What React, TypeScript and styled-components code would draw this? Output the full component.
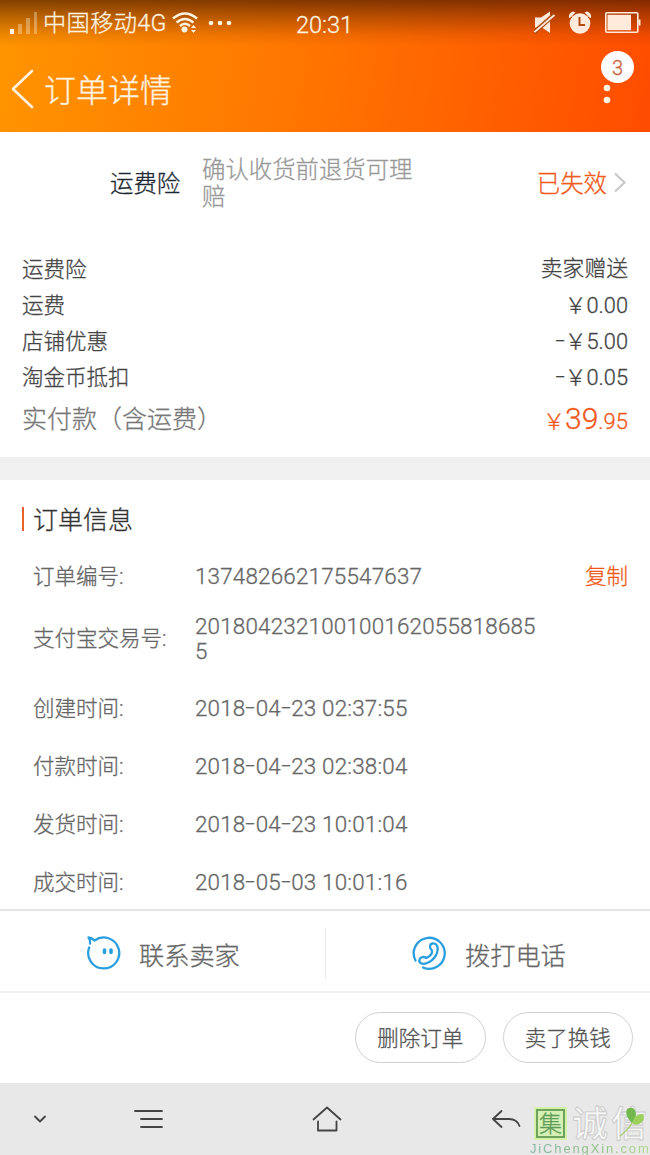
import React from 'react';
import styled, { createGlobalStyle } from 'styled-components';

const Global = createGlobalStyle`
  * { box-sizing: border-box; }
  body {
    margin: 0;
    background: #fff;
    font-family: Roboto, "Noto Sans CJK SC", sans-serif;
    font-weight: 300;
    line-height: 1.4;
    color: #444;
    -webkit-text-stroke: 0.3px currentColor;
  }
  svg { display: block; flex: none; }
`;

const Screen = styled.div`
  width: 650px;
  height: 1155px;
  display: flex;
  flex-direction: column;
  overflow: hidden;
  background: #fff;
`;

const Header = styled.header`
  height: 132px;
  flex: none;
  color: #fff3e2;
  background:
    linear-gradient(180deg, rgba(70, 25, 0, 0.68) 0, rgba(90, 35, 0, 0.4) 18px, rgba(110, 40, 0, 0.12) 35px, rgba(120, 40, 0, 0) 46px),
    linear-gradient(100deg, #ff9500 0%, #ff7300 50%, #ff4c00 100%);
`;

const StatusBar = styled.div`
  height: 45px;
  padding: 0 9px 0 10px;
  display: grid;
  grid-template-columns: 1fr auto 1fr;
  align-items: center;
`;

const Carrier = styled.div`
  display: flex;
  align-items: center;
  font-size: 23.2px;
  line-height: 40px;
  white-space: nowrap;
`;

const CarrierName = styled.span`
  margin: 0 5px 0 5px;
  letter-spacing: 0.4px;
`;

const StatusDots = styled.span`
  margin-left: 10px;
`;

const Clock = styled.div`
  font-size: 23.5px;
  line-height: 40px;
  padding-top: 4px;
  margin-left: -2px;
`;

const Indicators = styled.div`
  display: flex;
  justify-content: flex-end;
  align-items: center;
  gap: 13px;
`;

const TitleBar = styled.div`
  height: 87px;
  padding: 0 17px 0 11px;
  display: flex;
  align-items: center;
`;

const Title = styled.h1`
  margin: 4px 0 0 10px;
  flex: 1;
  font-size: 32px;
  font-weight: 300;
  line-height: 48px;
`;

const More = styled.div`
  position: relative;
  width: 32px;
  height: 87px;
`;

const Dots = styled.svg`
  margin: 38px 0 0 1px;
`;

const Badge = styled.span`
  position: absolute;
  top: 6px;
  left: 0;
  width: 33px;
  height: 32px;
  border-radius: 50%;
  background: #fff;
  color: #c8623a;
  font-size: 20px;
  line-height: 34px;
  text-align: center;
`;

const Insurance = styled.section`
  height: 100px;
  flex: none;
  padding: 4px 23px 0 110px;
  display: flex;
  align-items: center;
  font-size: 23.4px;
  line-height: 27px;
`;

const InsuranceName = styled.span`
  width: 92px;
  color: #1c2833;
`;

const InsuranceNote = styled.p`
  width: 214px;
  margin: 0;
  color: #999;
`;

const InsuranceState = styled.span`
  flex: 1;
  margin-right: 6px;
  text-align: right;
  color: #f0591a;
`;

const InsuranceArrow = styled.span`
  padding-bottom: 3px;
`;

const Summary = styled.section`
  height: 225px;
  flex: none;
  padding: 19.5px 22px 0;
`;

const SummaryRow = styled.div<{ $total?: boolean }>`
  height: ${(p) => (p.$total ? 46 : 36.2)}px;
  display: flex;
  justify-content: space-between;
  align-items: center;
  font-size: ${(p) => (p.$total ? 25 : 21.5)}px;
  color: ${(p) => (p.$total ? '#777' : '#444')};
`;

const Amount = styled.span`
  font-size: 21.8px;
`;

const Price = styled.span`
  color: #f0591a;
  font-size: 22px;
`;

const PriceMajor = styled.span`
  font-size: 30px;
`;

const Divider = styled.div`
  height: 23px;
  flex: none;
  background: #f0f0f0;
`;

const OrderInfo = styled.section`
  height: 429px;
  flex: none;
  padding: 26px 22px 0;
`;

const SectionTitle = styled.h2`
  height: 26px;
  margin: 0 0 15.5px;
  display: flex;
  align-items: center;
  gap: 9px;
  font-size: 25px;
  font-weight: 300;
  line-height: 30px;
  color: #333;

  &::before {
    content: '';
    width: 2px;
    height: 24px;
    background: #e8602c;
  }
`;

const SectionName = styled.span`
  padding-top: 3px;
`;

const InfoRow = styled.div<{ $tall?: boolean }>`
  height: ${(p) => (p.$tall ? 66 : 58)}px;
  margin-bottom: ${(p) => (p.$tall ? 7.5 : 0)}px;
  padding-left: 11px;
  display: flex;
  align-items: center;
  font-size: 21.5px;
  line-height: 25px;
  color: #666;
`;

const InfoLabel = styled.span`
  width: 162px;
`;

const InfoValue = styled.span`
  width: 346px;
  font-size: 22.4px;
  letter-spacing: 0.2px;
  word-break: break-all;
`;

const Dash = styled.span`
  display: inline-block;
  margin: 0 1.8px;
  transform: translateY(-1px) scaleX(1.5);
`;

const Copy = styled.span`
  flex: 1;
  text-align: right;
  color: #f0591a;
`;

const Contacts = styled.section`
  height: 84px;
  flex: none;
  padding-top: 4px;
  display: flex;
  align-items: center;
  border-top: 2px solid #e4e4e4;
  border-bottom: 2px solid #f0f0f0;
`;

const Contact = styled.div`
  width: 325px;
  height: 50px;
  padding-left: 85px;
  display: flex;
  align-items: center;
  gap: 18px;
  font-size: 25.2px;
  color: #666;

  & + & {
    border-left: 1px solid #e8e8e8;
  }
`;

const ContactLabel = styled.span`
  padding-top: 7px;
`;

const Actions = styled.section`
  height: 90px;
  flex: none;
  padding: 0 17px 2px;
  display: flex;
  justify-content: flex-end;
  align-items: center;
  gap: 17px;
`;

const Pill = styled.button`
  width: 130.5px;
  height: 51px;
  padding: 5px 0 0;
  border: 1px solid #d0d0d0;
  border-radius: 26px;
  background: #fff;
  color: #555;
  font: inherit;
  font-size: 21.5px;
`;

const NavBar = styled.nav`
  height: 72px;
  flex: none;
  padding-left: 33px;
  display: flex;
  align-items: center;
  background: #e8e8e8;
`;

const NavItem = styled.div<{ $space: number }>`
  margin-right: ${(p) => p.$space}px;
`;

const Watermark = styled.div`
  height: 72px;
  padding-top: 23px;
`;

const WatermarkTop = styled.div`
  display: flex;
  align-items: center;
  height: 35px;
  padding-left: 6px;
`;

const Seal = styled.span`
  width: 29px;
  height: 29px;
  border: 2px solid #6ea35c;
  outline: 2px solid #d5f0a8;
  background: #d5f0b4;
  color: #5f9c5a;
  font-size: 23px;
  line-height: 28px;
  text-align: center;
`;

const WatermarkName = styled.span`
  position: relative;
  display: flex;
  gap: 3px;
  margin-left: 7px;
  padding-top: 2px;
  font-size: 36px;
  font-weight: 500;
  line-height: 36px;
  color: #f6f6f6;
  -webkit-text-stroke: 0.8px #c8c8c8;
`;

const Leaf = styled.svg`
  position: absolute;
  top: 0;
  right: 2px;
`;

const WatermarkUrl = styled.div`
  margin-top: 1px;
  font: 400 13px/13px "Liberation Sans", sans-serif;
  letter-spacing: 1.85px;
  background: linear-gradient(90deg, #83b5a5, #8fc080 60%, #b0dc8c);
  background-clip: text;
  color: transparent;
  -webkit-text-stroke: 0;
  white-space: nowrap;
`;

const SUMMARY = [
  ['运费险', '卖家赠送'],
  ['运费', '￥0.00'],
  ['店铺优惠', '-￥5.00'],
  ['淘金币抵扣', '-￥0.05'],
];

const INFO = [
  { label: '订单编号:', value: '137482662175547637', copy: true },
  { label: '支付宝交易号:', value: '2018042321001001620558186855', tall: true },
  { label: '创建时间:', value: '2018-04-23 02:37:55' },
  { label: '付款时间:', value: '2018-04-23 02:38:04' },
  { label: '发货时间:', value: '2018-04-23 10:01:04' },
  { label: '成交时间:', value: '2018-05-03 10:01:16' },
];

const Dashed = ({ text }: { text: string }) => (
  <>
    {text.split('-').map((part, i) => (
      <React.Fragment key={i}>
        {i > 0 && <Dash>-</Dash>}
        {part}
      </React.Fragment>
    ))}
  </>
);

const SignalIcon = () => (
  <svg width="28" height="22" viewBox="0 0 28 22" fill="#fff3e2">
    <rect x="0" y="17" width="4" height="5" />
    <rect x="8" y="12" width="4" height="10" opacity=".35" />
    <rect x="16" y="6" width="4" height="16" opacity=".35" />
    <rect x="24" y="0" width="3" height="22" opacity=".35" />
  </svg>
);

const WifiIcon = () => (
  <svg width="26" height="21" viewBox="0 0 26 21" fill="none" stroke="#fff3e2" strokeWidth="2.4">
    <path d="M1 6.5Q13-3.500 25 6.5M4.500 10.500Q13 3.500 21.500 10.500M8 14Q13 9.500 18 14" />
    <circle cx="12.500" cy="17.500" r="3" fill="#fff3e2" stroke="none" />
    <path d="M19 16l2.500-3 2.500 3zM19 18l2.500 3 2.500-3z" fill="#fff3e2" stroke="none" />
  </svg>
);

const EllipsisIcon = () => (
  <svg width="24" height="6" viewBox="0 0 24 6" fill="#fff3e2">
    <circle cx="3" cy="3" r="2.300" />
    <circle cx="12" cy="3" r="2.300" />
    <circle cx="21" cy="3" r="2.300" />
  </svg>
);

const MuteIcon = () => (
  <svg width="21" height="23" viewBox="0 0 21 23">
    <path d="M1 6.500h6L16 .500V22L8 16.500H1z" fill="#ffeadc" />
    <path d="M0 21.500L20 4" stroke="#b04a10" strokeWidth="4.400" />
    <path d="M.500 21L20.500 4" stroke="#ffeadc" strokeWidth="1.800" />
  </svg>
);

const AlarmIcon = () => (
  <svg width="24" height="23" viewBox="0 0 24 23">
    <circle cx="12" cy="12.500" r="10.300" fill="#ffeadc" />
    <path d="M1 7Q0 2 5 .500L7.500 1.500 2.500 6.500zM23 7Q24 2 19 .500L16.500 1.500 21.500 6.500z" fill="#ffeadc" />
    <path d="M11.500 6v8H17" fill="none" stroke="#b04a10" strokeWidth="2" />
  </svg>
);

const BatteryIcon = () => (
  <svg width="36" height="21" viewBox="0 0 36 21" fill="#ffeadc">
    <rect x=".800" y=".800" width="32" height="19.400" rx="1" fill="none" stroke="#ffeadc" strokeWidth="1.600" />
    <rect x="2.500" y="2.800" width="23.500" height="15.400" />
    <rect x="33.500" y="7.500" width="2" height="6" />
  </svg>
);

const BackIcon = () => (
  <svg width="23" height="40" viewBox="0 0 23 40" fill="none" stroke="#fff3e2" strokeWidth="2.600" strokeLinecap="round" strokeLinejoin="round">
    <path d="M21 2L2 20l19 18" />
  </svg>
);

const ChevronIcon = () => (
  <svg width="14" height="22" viewBox="0 0 14 22" fill="none" stroke="#c9c9c9" strokeWidth="2.200">
    <path d="M2 1.500L11.500 10.500 2 19.500" />
  </svg>
);

const WangwangIcon = () => (
  <svg width="36" height="36" viewBox="0 0 36 36" fill="none" stroke="#2a9fe0" strokeWidth="2.300" strokeLinecap="round" strokeLinejoin="round">
    <path d="M4.200 12.500A15.500 15.500 0 1 0 9.500 5.500Q7 3 3.500 2.500Q5.500 5 5 8.500" />
    <path d="M19.500 15v2.500M26 15v2.500" strokeWidth="3.600" />
  </svg>
);

const PhoneIcon = () => (
  <svg width="36" height="36" viewBox="0 0 36 36" fill="none" stroke="#2a9fe0" strokeWidth="2.300" strokeLinecap="round" strokeLinejoin="round">
    <path d="M4.500 25.500A15.500 15.500 0 1 1 12 32.500" />
    <path d="M19 11.500C19 8 24 7 26 10.500C28.500 17 23.500 25 16 28C11 30 7.500 28 8.500 24.500C9.500 21.500 13 21.500 15.500 23C19.500 21 21.500 18.500 21 15.500C19.500 14.500 19 13 19 11.500Z" />
  </svg>
);

const navStroke = { fill: 'none', stroke: '#444', strokeWidth: 1.8, strokeLinecap: 'round', strokeLinejoin: 'round' } as const;

export default function App() {
  return (
    <>
      <Global />
      <Screen>
        <Header>
          <StatusBar>
            <Carrier>
              <SignalIcon />
              <CarrierName>中国移动4G</CarrierName>
              <WifiIcon />
              <StatusDots>
                <EllipsisIcon />
              </StatusDots>
            </Carrier>
            <Clock>20:31</Clock>
            <Indicators>
              <MuteIcon />
              <AlarmIcon />
              <BatteryIcon />
            </Indicators>
          </StatusBar>
          <TitleBar>
            <BackIcon />
            <Title>订单详情</Title>
            <More>
              <Dots width="10" height="22" viewBox="0 0 10 22" fill="#fff3e2">
                <circle cx="5" cy="5" r="3.300" />
                <circle cx="5" cy="17" r="3.300" />
              </Dots>
              <Badge>3</Badge>
            </More>
          </TitleBar>
        </Header>

        <Insurance>
          <InsuranceName>运费险</InsuranceName>
          <InsuranceNote>确认收货前退货可理赔</InsuranceNote>
          <InsuranceState>已失效</InsuranceState>
          <InsuranceArrow>
            <ChevronIcon />
          </InsuranceArrow>
        </Insurance>

        <Summary>
          {SUMMARY.map(([label, value]) => (
            <SummaryRow key={label}>
              <span>{label}</span>
              <Amount>
                <Dashed text={value} />
              </Amount>
            </SummaryRow>
          ))}
          <SummaryRow $total>
            <span>实付款（含运费）</span>
            <Price>
              ￥<PriceMajor>39</PriceMajor>.95
            </Price>
          </SummaryRow>
        </Summary>

        <Divider />

        <OrderInfo>
          <SectionTitle>
            <SectionName>订单信息</SectionName>
          </SectionTitle>
          {INFO.map((row) => (
            <InfoRow key={row.label} $tall={row.tall}>
              <InfoLabel>{row.label}</InfoLabel>
              <InfoValue>
                <Dashed text={row.value} />
              </InfoValue>
              {row.copy && <Copy>复制</Copy>}
            </InfoRow>
          ))}
        </OrderInfo>

        <Contacts>
          <Contact>
            <WangwangIcon />
            <ContactLabel>联系卖家</ContactLabel>
          </Contact>
          <Contact>
            <PhoneIcon />
            <ContactLabel>拨打电话</ContactLabel>
          </Contact>
        </Contacts>

        <Actions>
          <Pill>删除订单</Pill>
          <Pill>卖了换钱</Pill>
        </Actions>

        <NavBar>
          <NavItem $space={86}>
            <svg width="14" height="8" viewBox="0 0 14 8" {...navStroke}>
              <path d="M2 1.500l5 5 5-5" />
            </svg>
          </NavItem>
          <NavItem $space={149}>
            <svg width="30" height="20" viewBox="0 0 30 20" {...navStroke}>
              <path d="M2 2h27M8 10h21M8 18h21" />
            </svg>
          </NavItem>
          <NavItem $space={149}>
            <svg width="30" height="26" viewBox="0 0 30 26" {...navStroke}>
              <path d="M1.500 13.500L15 1.500l13.500 12M6 15.500V24.500h18.500V15.500" />
            </svg>
          </NavItem>
          <NavItem $space={9}>
            <svg width="30" height="20" viewBox="0 0 30 20" {...navStroke}>
              <path d="M10.500 2L2 10l8.500 8M2 10H18Q26 10 28.500 17" />
            </svg>
          </NavItem>
          <Watermark>
            <WatermarkTop>
              <Seal>集</Seal>
              <WatermarkName>
                <span>诚</span>
                <span>信</span>
                <Leaf width="26" height="32" viewBox="0 0 26 32">
                  <path d="M13 18Q5 10 8 4Q15 0 17 8Q17 14 13 18Z" fill="#72b84f" />
                  <path d="M13 18Q15 9 24 9Q27 16 20 19Q16 21 13 18Z" fill="#9ccf5c" />
                  <path d="M13 18Q9 25 1 31" fill="none" stroke="#a5cf76" strokeWidth="1.500" />
                </Leaf>
              </WatermarkName>
            </WatermarkTop>
            <WatermarkUrl>JiChengXin.com</WatermarkUrl>
          </Watermark>
        </NavBar>
      </Screen>
    </>
  );
}
